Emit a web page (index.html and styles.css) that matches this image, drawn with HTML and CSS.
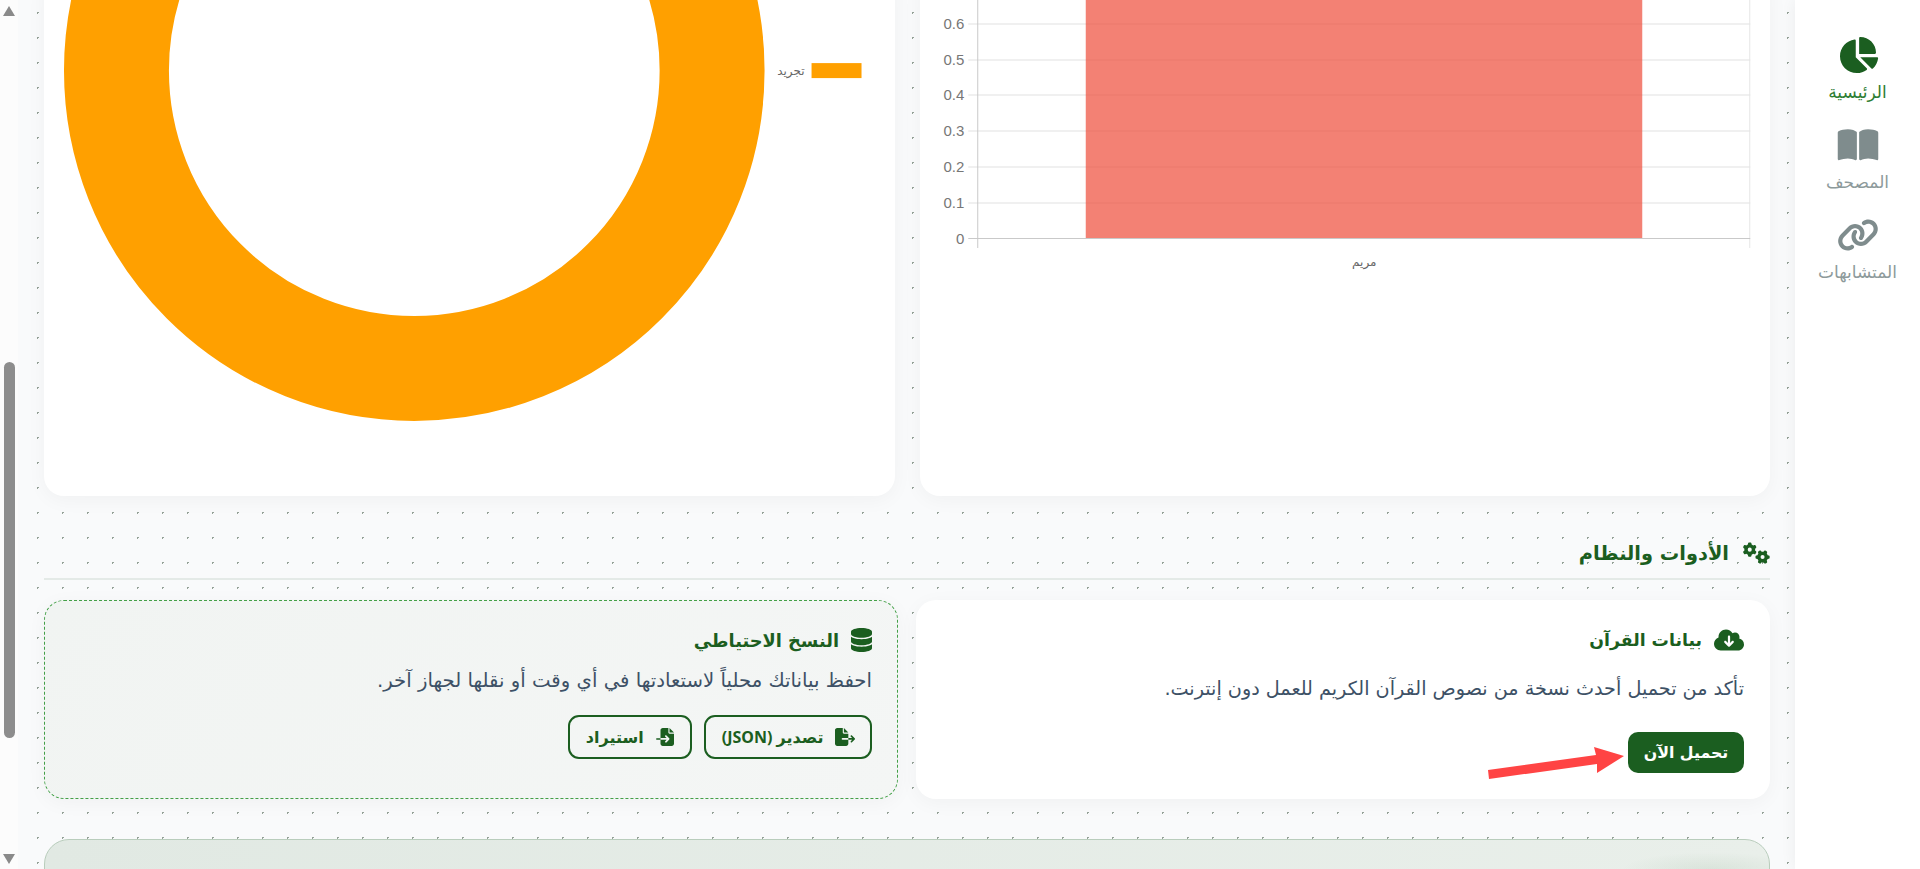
FILE: index.html
```html
<!DOCTYPE html>
<html lang="ar" dir="rtl">

<head>
    <meta charset="UTF-8">
    <meta name="viewport" content="width=device-width, initial-scale=1.0">
    <title>الأدوات والنظام</title>
    <link rel="stylesheet" href="styles.css">
</head>

<body>
    <!-- الشريط الجانبي -->
    <nav class="sidebar">
        <a class="nav-item active">
            <svg class="nav-icon" viewBox="0 0 576 512"><path d="M304 240V16.6c0-9 7-16.6 16-16.6C443.7 0 544 100.3 544 224c0 9-7.6 16-16.6 16H304zM32 272C32 150.7 122.1 50.3 239 34.3c9.2-1.3 17 6.1 17 15.4V288L412.5 444.5c6.7 6.7 6.2 17.7-1.5 23.1C371.8 495.6 323.8 512 272 512C139.5 512 32 404.6 32 272zm526.4 16c9.3 0 16.6 7.8 15.4 17c-7.7 55.9-34.6 105.6-73.9 142.3c-6 5.6-15.4 5.2-21.2-.7L320 288H558.4z"/></svg>
            <span>الرئيسية</span>
        </a>
        <a class="nav-item">
            <svg class="nav-icon" viewBox="0 0 576 512"><path d="M249.6 471.5c10.8 3.8 22.4-4.1 22.4-15.5V78.6c0-4.2-1.6-8.4-5-11C247.4 52 202.4 32 144 32C93.5 32 46.3 45.3 18.1 56.1C6.8 60.5 0 71.7 0 83.8V454.1c0 11.9 12.8 20.2 24.1 16.5C55.6 460.1 105.5 448 144 448c33.9 0 79 14 105.6 23.5zm76.8 0C353 462 398.1 448 432 448c38.5 0 88.4 12.1 119.9 22.6c11.3 3.8 24.1-4.6 24.1-16.5V83.8c0-12.1-6.8-23.3-18.1-27.6C529.7 45.3 482.5 32 432 32c-58.4 0-103.4 20-123 35.6c-3.3 2.6-5 6.8-5 11V456c0 11.4 11.7 19.3 22.4 15.5z"/></svg>
            <span>المصحف</span>
        </a>
        <a class="nav-item">
            <svg class="nav-icon" viewBox="0 0 640 512"><path d="M579.8 267.7c56.5-56.5 56.5-148 0-204.5c-50-50-128.8-56.5-186.3-15.4l-1.6 1.1c-14.4 10.3-17.7 30.3-7.4 44.6s30.3 17.7 44.6 7.4l1.6-1.1c32.1-22.9 76-19.3 103.8 8.6c31.5 31.5 31.5 82.5 0 114L422.3 334.8c-31.5 31.5-82.5 31.5-114 0c-27.9-27.9-31.5-71.8-8.6-103.8l1.1-1.6c10.3-14.4 6.9-34.4-7.4-44.6s-34.4-6.9-44.6 7.4l-1.1 1.6C206.5 251.2 213 330 263 380c56.5 56.5 148 56.5 204.5 0L579.8 267.7zM60.2 244.3c-56.5 56.5-56.5 148 0 204.5c50 50 128.8 56.5 186.3 15.4l1.6-1.1c14.4-10.3 17.7-30.3 7.4-44.6s-30.3-17.7-44.6-7.4l-1.6 1.1c-32.1 22.9-76 19.3-103.8-8.6C74 372 74 321 105.5 289.5L217.7 177.2c31.5-31.5 82.5-31.5 114 0c27.9 27.9 31.5 71.8 8.6 103.9l-1.1 1.6c-10.3 14.4-6.9 34.4 7.4 44.6s34.4 6.9 44.6-7.4l1.1-1.6C433.5 260.8 427 182 377 132c-56.5-56.5-148-56.5-204.5 0L60.2 244.3z"/></svg>
            <span>المتشابهات</span>
        </a>
    </nav>

    <main class="main">
        <!-- الرسوم البيانية -->
        <section class="charts">
            <div class="card chart-card">
                <svg class="chart" viewBox="920 -30 850 526">
                    <g class="grid-lines">
                        <line x1="968" y1="24" x2="1750" y2="24"/>
                        <line x1="968" y1="60" x2="1750" y2="60"/>
                        <line x1="968" y1="95" x2="1750" y2="95"/>
                        <line x1="968" y1="131" x2="1750" y2="131"/>
                        <line x1="968" y1="167" x2="1750" y2="167"/>
                        <line x1="968" y1="203" x2="1750" y2="203"/>
                    </g>
                    <line class="axis-line" x1="977.5" y1="-30" x2="977.5" y2="248"/>
                    <line class="axis-end" x1="1749.5" y1="-30" x2="1749.5" y2="248"/>
                    <line class="axis-line" x1="968" y1="238.5" x2="1750" y2="238.5"/>
                    <rect class="bar" x="1085.5" y="-30" width="556.5" height="268"/>
                    <g class="tick-labels">
                        <text x="964" y="29">0.6</text>
                        <text x="964" y="65">0.5</text>
                        <text x="964" y="100">0.4</text>
                        <text x="964" y="136">0.3</text>
                        <text x="964" y="172">0.2</text>
                        <text x="964" y="208">0.1</text>
                        <text x="964" y="244">0</text>
                    </g>
                    <text class="bar-label" x="1364" y="266">مريم</text>
                </svg>
            </div>
            <div class="card chart-card">
                <svg class="chart" viewBox="44 -30 851 526">
                    <circle class="donut" cx="414.5" cy="70.5" r="298" />
                    <rect class="legend-box" x="812" y="63" width="50" height="15"/>
                    <text class="legend-label" x="805" y="75">تجريد</text>
                </svg>
            </div>
        </section>

        <!-- الأدوات والنظام -->
        <h2 class="section-title">
            <svg class="title-icon" viewBox="0 0 640 512"><path d="M308.5 135.3c7.1-6.3 9.9-16.2 6.2-25c-2.3-5.3-4.8-10.5-7.6-15.5L304 89.4c-3-5-6.3-9.9-9.8-14.6c-5.7-7.6-15.7-10.1-24.7-7.1l-28.2 9.3c-10.7-8.8-23-16-36.2-20.9L199 27.1c-1.9-9.3-9.1-16.7-18.5-17.8C173.9 8.4 167.2 8 160.4 8h-.7c-6.8 0-13.5 .4-20.1 1.2c-9.4 1.1-16.6 8.6-18.5 17.8L115 56.1c-13.3 5-25.5 12.1-36.2 20.9L50.5 67.8c-9-3-19-.5-24.7 7.1c-3.5 4.7-6.8 9.6-9.9 14.6l-3 5.3c-2.8 5-5.3 10.2-7.6 15.6c-3.7 8.7-.9 18.6 6.2 25l22.2 19.8C32.6 161.9 32 168.9 32 176s.6 14.1 1.7 20.9L11.5 216.7c-7.1 6.3-9.9 16.2-6.2 25c2.3 5.3 4.8 10.5 7.6 15.6l3 5.2c3 5.1 6.3 9.9 9.9 14.6c5.7 7.6 15.7 10.1 24.7 7.1l28.2-9.3c10.7 8.8 23 16 36.2 20.9l6.1 29.1c1.9 9.3 9.1 16.7 18.5 17.8c6.7 .8 13.5 1.2 20.4 1.2s13.7-.4 20.4-1.2c9.4-1.1 16.6-8.6 18.5-17.8l6.1-29.1c13.3-5 25.5-12.1 36.2-20.9l28.2 9.3c9 3 19 .5 24.7-7.1c3.5-4.7 6.8-9.5 9.8-14.6l3.1-5.4c2.8-5 5.3-10.2 7.6-15.5c3.7-8.7 .9-18.6-6.2-25l-22.2-19.8c1.1-6.8 1.7-13.8 1.7-20.9s-.6-14.1-1.7-20.9l22.2-19.8zM112 176a48 48 0 1 1 96 0 48 48 0 1 1 -96 0zM504.7 500.5c6.3 7.1 16.2 9.9 25 6.2c5.3-2.3 10.5-4.8 15.5-7.6l5.4-3.1c5-3 9.9-6.3 14.6-9.8c7.6-5.7 10.1-15.7 7.1-24.7l-9.3-28.2c8.8-10.7 16-23 20.9-36.2l29.1-6.1c9.3-1.9 16.7-9.1 17.8-18.5c.8-6.7 1.2-13.5 1.2-20.4s-.4-13.7-1.2-20.4c-1.1-9.4-8.6-16.6-17.8-18.5L583.9 307c-5-13.3-12.1-25.5-20.9-36.2l9.3-28.2c3-9 .5-19-7.1-24.7c-4.7-3.5-9.6-6.8-14.6-9.9l-5.3-3c-5-2.8-10.2-5.3-15.6-7.6c-8.7-3.7-18.6-.9-25 6.2l-19.8 22.2c-6.8-1.1-13.8-1.7-20.9-1.7s-14.1 .6-20.9 1.7l-19.8-22.2c-6.3-7.1-16.2-9.9-25-6.2c-5.3 2.3-10.5 4.8-15.6 7.6l-5.2 3c-5.1 3-9.9 6.3-14.6 9.9c-7.6 5.7-10.1 15.7-7.1 24.7l9.3 28.2c-8.8 10.7-16 23-20.9 36.2L315.1 313c-9.3 1.9-16.7 9.1-17.8 18.5c-.8 6.7-1.2 13.5-1.2 20.4s.4 13.7 1.2 20.4c1.1 9.4 8.6 16.6 17.8 18.5l29.1 6.1c5 13.3 12.1 25.5 20.9 36.2l-9.3 28.2c-3 9-.5 19 7.1 24.7c4.7 3.5 9.5 6.8 14.6 9.8l5.4 3.1c5 2.8 10.2 5.3 15.5 7.6c8.7 3.7 18.6 .9 25-6.2l19.8-22.2c6.8 1.1 13.8 1.7 20.9 1.7s14.1-.6 20.9-1.7l19.8 22.2zM464 304a48 48 0 1 1 0 96 48 48 0 1 1 0-96z"/></svg>
            <span>الأدوات والنظام</span>
        </h2>

        <section class="tools">
            <div class="card tool-card">
                <h3 class="tool-title">
                    <svg class="cloud-icon" viewBox="0 0 640 512"><path d="M144 480C64.5 480 0 415.5 0 336c0-62.8 40.2-116.2 96.2-135.9c-.1-2.7-.2-5.4-.2-8.1c0-88.4 71.6-160 160-160c59.3 0 111 32.2 138.7 80.2C409.9 102 428.3 96 448 96c53 0 96 43 96 96c0 12.2-2.3 23.8-6.4 34.6C596 238.4 640 290.1 640 352c0 70.7-57.3 128-128 128H144zm79-167l80 80c9.4 9.4 24.6 9.4 33.9 0l80-80c9.4-9.4 9.4-24.6 0-33.9s-24.6-9.4-33.9 0l-39 39V184c0-13.3-10.7-24-24-24s-24 10.7-24 24V318.1l-39-39c-9.4-9.4-24.6-9.4-33.9 0s-9.4 24.6 0 33.9z"/></svg>
                    <span>بيانات القرآن</span>
                </h3>
                <p class="tool-text quran-text">تأكد من تحميل أحدث نسخة من نصوص القرآن الكريم للعمل دون إنترنت.</p>
                <button class="btn-primary">تحميل الآن</button>
                <svg class="arrow" viewBox="0 0 140 36"><polygon points="2,26 110,11 108,3 138,12 111,29 111,20 3,35"/></svg>
            </div>
            <div class="card tool-card backup-card">
                <h3 class="tool-title">
                    <svg class="db-icon" viewBox="0 0 448 512"><path d="M448 80v48c0 44.2-100.3 80-224 80S0 172.2 0 128V80C0 35.8 100.3 0 224 0S448 35.8 448 80zM393.2 214.7c20.8-7.4 39.9-16.9 54.8-28.6V288c0 44.2-100.3 80-224 80S0 332.2 0 288V186.1c14.9 11.8 34 21.2 54.8 28.6C99.7 230.7 159.5 240 224 240s124.3-9.3 169.2-25.3zM0 346.1c14.9 11.8 34 21.2 54.8 28.6C99.7 390.7 159.5 400 224 400s124.3-9.3 169.2-25.3c20.8-7.4 39.9-16.9 54.8-28.6V432c0 44.2-100.3 80-224 80S0 476.2 0 432V346.1z"/></svg>
                    <span>النسخ الاحتياطي</span>
                </h3>
                <p class="tool-text">احفظ بياناتك محلياً لاستعادتها في أي وقت أو نقلها لجهاز آخر.</p>
                <div class="btn-row">
                    <button class="btn-outline">
                        <svg class="btn-icon" viewBox="0 0 576 512"><path d="M0 64C0 28.7 28.7 0 64 0H224V128c0 17.7 14.3 32 32 32H384V288H216c-13.3 0-24 10.7-24 24s10.7 24 24 24H384V448c0 35.3-28.7 64-64 64H64c-35.3 0-64-28.7-64-64V64zM384 336V288H494.1l-39-39c-9.4-9.4-9.4-24.6 0-33.9s24.6-9.4 33.9 0l80 80c9.4 9.4 9.4 24.6 0 33.9l-80 80c-9.4 9.4-24.6 9.4-33.9 0s-9.4-24.6 0-33.9l39-39H384zm0-208H256V0L384 128z"/></svg>
                        <span>تصدير (JSON)</span>
                    </button>
                    <button class="btn-outline">
                        <svg class="btn-icon" viewBox="0 0 512 512"><path d="M128 64c0-35.3 28.7-64 64-64H352V128c0 17.7 14.3 32 32 32H512V448c0 35.3-28.7 64-64 64H192c-35.3 0-64-28.7-64-64V336H302.1l-39 39c-9.4 9.4-9.4 24.6 0 33.9s24.6 9.4 33.9 0l80-80c9.4-9.4 9.4-24.6 0-33.9l-80-80c-9.4-9.4-24.6-9.4-33.9 0s-9.4 24.6 0 33.9l39 39H128V64zm0 224v48H24c-13.3 0-24-10.7-24-24s10.7-24 24-24H128zM512 128H384V0L512 128z"/></svg>
                        <span>استيراد</span>
                    </button>
                </div>
            </div>
        </section>

        <section class="next-card"></section>
    </main>

    <!-- شريط التمرير -->
    <div class="scrollbar">
        <div class="scroll-up"></div>
        <div class="scroll-thumb"></div>
        <div class="scroll-down"></div>
    </div>
</body>

</html>
```

FILE: styles.css
```css
* {
    box-sizing: border-box;
}

html,
body {
    height: 100%;
}

body {
    margin: 0;
    display: flex;
    overflow: hidden;
    background-color: #f9fafb;
    font-family: "DejaVu Sans", "Noto Sans", sans-serif;
    color: #1b5e20;
}

/* sidebar */
.sidebar {
    flex: 0 0 125px;
    padding-top: 37px;
    background: white;
    box-shadow: 0 0 15px rgba(0, 0, 0, 0.06);
    display: flex;
    flex-direction: column;
    align-items: center;
    position: relative;
    z-index: 2;
}

.nav-item {
    height: 90px;
    display: flex;
    flex-direction: column;
    align-items: center;
    gap: 9px;
    font-size: 17px;
    line-height: 20px;
    color: #8d9a9b;
    fill: #7f8c8d;
}

.nav-item.active {
    color: #2e7d32;
    fill: #1b5e20;
}

.nav-icon {
    height: 36px;
    width: 42px;
}

/* main area */
.main {
    flex: 1;
    min-width: 0;
    padding: 0 25px 0 26px;
    background-color: #f9fafb;
    background-image: radial-gradient(#95a298 1px, transparent 1px);
    background-size: 25px 25px;
    background-position: 7px 0;
}

.card {
    background: white;
    border-radius: 20px;
    box-shadow: 0 4px 20px rgba(0, 0, 0, 0.04);
}

.charts {
    display: grid;
    grid-template-columns: 1fr 1fr;
    gap: 25px;
    margin-top: -30px;
}

.chart-card {
    height: 526px;
    overflow: hidden;
}

.chart {
    display: block;
    width: 100%;
    height: 100%;
    direction: ltr;
}

.grid-lines line {
    stroke: #ebebeb;
    stroke-width: 1.5;
}

.axis-line {
    stroke: #c9c9c9;
    stroke-width: 1;
}

.axis-end {
    stroke: #e6e6e6;
    stroke-width: 1;
}

.bar {
    fill: rgba(238, 80, 62, 0.72);
}

.tick-labels text {
    font-family: "Liberation Sans", sans-serif;
    font-size: 15px;
    fill: #777;
    text-anchor: end;
}

.bar-label {
    font-size: 12px;
    fill: #666;
    text-anchor: middle;
}

.donut {
    fill: none;
    stroke: #ffa000;
    stroke-width: 105;
}

.legend-box {
    fill: #ffa000;
}

.legend-label {
    font-size: 12px;
    fill: #666;
    text-anchor: end;
}

/* tools */
.section-title {
    margin: 40px 0 20px;
    height: 44px;
    padding-bottom: 8px;
    border-bottom: 2px solid #e4eae7;
    display: flex;
    align-items: center;
    gap: 14px;
    font-size: 19.4px;
    font-weight: bold;
    color: #1b5e20;
}

.title-icon {
    width: 27px;
    height: 22px;
    fill: #1b5e20;
}

.tools {
    display: grid;
    grid-template-columns: 1fr 1fr;
    gap: 18px;
    margin-bottom: 40px;
}

.tool-card {
    height: 199px;
    padding: 28px 26px 0;
    position: relative;
}

.backup-card {
    background: linear-gradient(135deg, #f1f4f2, #f4f6f5);
    border: 1px dashed #43a047;
    padding-top: 27px;
    padding-left: 25px;
    padding-right: 25px;
}

.tool-title {
    margin: 0;
    display: flex;
    align-items: center;
    gap: 12px;
    height: 24px;
    font-size: 17.3px;
    font-weight: bold;
    color: #1b5e20;
}

.backup-card .tool-title {
    font-size: 17.8px;
}

.cloud-icon {
    width: 30px;
    height: 24px;
    fill: #1b5e20;
}

.db-icon {
    width: 21px;
    height: 24px;
    fill: #1b5e20;
}

.tool-text {
    margin: 16px 0 0;
    font-size: 19.7px;
    line-height: 26px;
    color: #3d5166;
}

.quran-text {
    margin-top: 24px;
    font-size: 19.2px;
}

.btn-primary {
    display: block;
    margin-top: 30px;
    width: 116px;
    height: 41px;
    border: none;
    border-radius: 10px;
    background: #1b5e20;
    color: white;
    font-family: inherit;
    font-size: 15.8px;
    font-weight: bold;
}

.arrow {
    position: absolute;
    left: 570px;
    top: 144px;
    width: 140px;
    height: 36px;
    fill: #ff4444;
}

.btn-row {
    display: flex;
    gap: 12px;
    margin-top: 21px;
}

.btn-outline {
    height: 44px;
    padding: 0 15.5px;
    border: 2px solid #1b5e20;
    border-radius: 11px;
    background: transparent;
    color: #1b5e20;
    font-family: "Noto Sans", "DejaVu Sans", sans-serif;
    font-size: 16px;
    font-weight: bold;
    display: flex;
    align-items: center;
    gap: 11px;
}

.btn-icon {
    width: 20px;
    height: 18px;
    fill: #1b5e20;
}

.next-card {
    height: 200px;
    border: 1px solid #b9cdbc;
    border-radius: 25px;
    background: radial-gradient(ellipse 90px 18px at 1666px 30px, rgba(27, 94, 32, 0.08), transparent),
        linear-gradient(90deg, #e1e9e3, #e9efea);
}

/* fake scrollbar on the left */
.scrollbar {
    flex: 0 0 18px;
    background: #fcfcfc;
    display: flex;
    flex-direction: column;
    align-items: center;
}

.scroll-up,
.scroll-down {
    width: 0;
    height: 0;
    border-left: 6.5px solid transparent;
    border-right: 6.5px solid transparent;
}

.scroll-up {
    margin-top: 6px;
    border-bottom: 10px solid #8a8a8a;
}

.scroll-down {
    margin-top: 116px;
    border-top: 10px solid #8a8a8a;
}

.scroll-thumb {
    width: 11px;
    height: 376px;
    margin-top: 346px;
    border-radius: 6px;
    background: #8d8d8d;
}
```
